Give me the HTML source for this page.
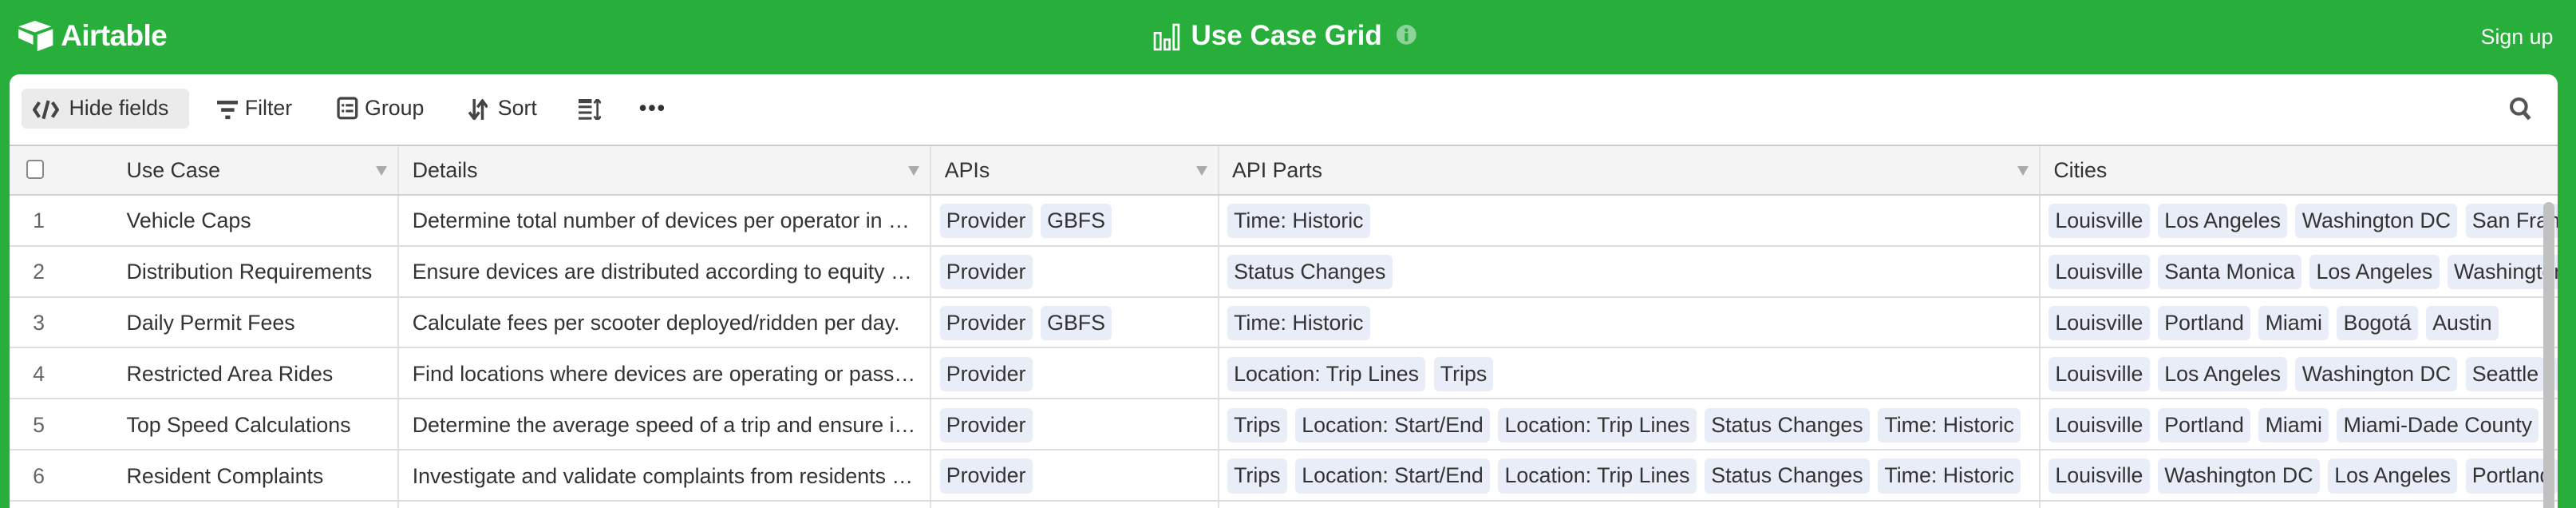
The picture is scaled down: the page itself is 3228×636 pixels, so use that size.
<!DOCTYPE html>
<html><head><meta charset="utf-8"><style>
html,body{margin:0;padding:0;}
html{width:3228px;height:636px;overflow:hidden;background:#fff}
body{width:1568px;height:309px;overflow:hidden;zoom:2.0587;background:#28ae3a;font-family:"Liberation Sans",sans-serif;color:#333;position:relative}
.hdr{position:absolute;left:0;top:0;width:1568px;height:45px;color:#fff}
.logo{position:absolute;left:10px;top:12px}
.brand{position:absolute;left:37px;top:11px;font-size:18px;font-weight:bold;letter-spacing:-0.3px}
.title{position:absolute;left:725px;top:12px;font-size:17px;font-weight:bold}
.signup{position:absolute;left:1510px;top:15px;font-size:13px}
.card{position:absolute;left:6px;top:45px;width:1551px;height:264px;background:#fff;border-radius:6px 6px 0 0;overflow:hidden}
.tb{position:absolute;top:9px;height:24px;font-size:13px;line-height:24px;color:#333}
.btn{background:#ebebeb;border-radius:3px}
.grid{position:absolute;left:0;top:43px;width:1551px}
.hrow{position:absolute;top:0;height:29px;width:1551px;background:#f4f4f4;border-top:1px solid #ccc;border-bottom:2px solid #d3d3d3}
.row{position:absolute;height:30px;width:1551px;border-bottom:1px solid #dcdde0;background:#fff}
.c{position:absolute;top:0;height:100%;font-size:13px;white-space:nowrap;overflow:hidden;box-sizing:border-box}
.v{border-right:1px solid #e2e2e2}
.t{display:inline-block;background:#e9edf8;border-radius:3px;padding:0 4px;height:21px;line-height:21px;margin:5px 5px 0 0;font-size:13px;color:#333}
.arr{position:absolute;top:12px;width:0;height:0;border-left:3.5px solid transparent;border-right:3.5px solid transparent;border-top:6px solid #aaa}
</style></head><body>
<div class="hdr">
<svg class="logo" width="24" height="20" viewBox="0 0 24 20"><path d="M11 0.5 L21 4 L11 7.5 L1 4Z" fill="#fff"/><path d="M12.5 9 L22 5.5 V15.5 L12.5 19Z" fill="#fff"/><path d="M1 5.5 L10 9.5 V15 L1 11Z" fill="#fff"/></svg>
<div class="brand">Airtable</div>
<svg style="position:absolute;left:702px;top:14px" width="17" height="17" viewBox="0 0 17 17"><rect x="1" y="6" width="3.5" height="10" fill="none" stroke="#fff" stroke-width="1.3"/><rect x="7" y="10" width="3" height="6" fill="none" stroke="#fff" stroke-width="1.3"/><rect x="12.5" y="1" width="3" height="15" fill="none" stroke="#fff" stroke-width="1.3"/></svg>
<div class="title">Use Case Grid</div>
<svg style="position:absolute;left:850px;top:15px" width="12" height="12" viewBox="0 0 12 12"><circle cx="6" cy="6" r="6" fill="#8fd39a"/><rect x="5" y="5" width="2" height="5" fill="#28ae3a"/><circle cx="6" cy="3.2" r="1.1" fill="#28ae3a"/></svg>
<div class="signup">Sign up</div>
</div>
<div class="card">
<div class="tb btn" style="left:7px;width:102px"></div>
<svg style="position:absolute;left:14px;top:15px" width="16" height="13" viewBox="0 0 16 13"><path d="M4 2 L1 6.5 L4 11 M12 2 L15 6.5 L12 11 M9.5 1 L6.5 12" stroke="#444" stroke-width="2" fill="none"/></svg>
<div class="tb" style="left:36px">Hide fields</div>
<svg style="position:absolute;left:126px;top:15px" width="13" height="13" viewBox="0 0 13 13"><rect x="0" y="1" width="13" height="2.2" fill="#444"/><rect x="2.5" y="5.5" width="8" height="2.2" fill="#444"/><rect x="5" y="10" width="3" height="2.2" fill="#444"/></svg>
<div class="tb" style="left:143px">Filter</div>
<svg style="position:absolute;left:199px;top:14px" width="13" height="14" viewBox="0 0 13 14"><rect x="1" y="1" width="11" height="12" rx="1.5" fill="none" stroke="#444" stroke-width="1.6"/><rect x="3" y="4.5" width="1.5" height="1.5" fill="#444"/><rect x="5.5" y="4.5" width="4.5" height="1.5" fill="#444"/><rect x="3" y="8" width="1.5" height="1.5" fill="#444"/><rect x="5.5" y="8" width="4.5" height="1.5" fill="#444"/></svg>
<div class="tb" style="left:216px">Group</div>
<svg style="position:absolute;left:279px;top:15px" width="12" height="13" viewBox="0 0 12 13"><path d="M3.5 0 V11 M0.5 8 L3.5 12 L6.5 8 M8.5 13 V2 M5.5 5 L8.5 1 L11.5 5" stroke="#444" stroke-width="1.7" fill="none"/></svg>
<div class="tb" style="left:297px">Sort</div>
<svg style="position:absolute;left:346px;top:15px" width="14" height="13" viewBox="0 0 14 13"><rect x="0" y="0" width="8" height="2.5" fill="#444"/><rect x="0" y="4" width="8" height="1.5" fill="#444"/><rect x="0" y="7.5" width="8" height="1.5" fill="#444"/><rect x="0" y="11" width="8" height="1.5" fill="#444"/><path d="M11.5 0 V13 M9.5 2.5 L11.5 0 L13.5 2.5 M9.5 10.5 L11.5 13 L13.5 10.5" stroke="#444" stroke-width="1.3" fill="none"/></svg>
<div class="tb" style="left:383px;font-weight:bold;letter-spacing:1px">•••</div>
<svg style="position:absolute;left:1521px;top:14px" width="14" height="15" viewBox="0 0 14 15"><circle cx="6" cy="6" r="4.5" stroke="#555" stroke-width="2" fill="none"/><path d="M9 9.5 L12.5 13.5" stroke="#555" stroke-width="2.4"/></svg>
<div class="grid">
<div class="hrow">
<div style="position:absolute;left:10px;top:8px;width:9px;height:10px;border:1px solid #888;border-radius:2px;background:#fff"></div>
<div class="c v" style="left:60px;width:177px;padding:7px 0 0 11px">Use Case</div><div class="arr" style="left:223px"></div>
<div class="c v" style="left:237px;width:324px;padding:7px 0 0 8px">Details</div><div class="arr" style="left:547px"></div>
<div class="c v" style="left:561px;width:175px;padding:7px 0 0 8px">APIs</div><div class="arr" style="left:722px"></div>
<div class="c v" style="left:736px;width:500px;padding:7px 0 0 8px">API Parts</div><div class="arr" style="left:1222px"></div>
<div class="c" style="left:1236px;width:315px;padding:7px 0 0 8px">Cities</div>
</div>
<div style="position:absolute;top:31px;left:0;width:1551px">
<div class="row" style="top:0">
<div class="c" style="left:14px;padding-top:8px;color:#666">1</div>
<div class="c v" style="left:60px;width:177px;padding:8px 0 0 11px">Vehicle Caps</div>
<div class="c v" style="left:237px;width:324px;padding:8px 0 0 8px">Determine total number of devices per operator in …</div>
<div class="c v" style="left:561px;width:175px;padding-left:5px"><span class="t">Provider</span><span class="t">GBFS</span></div>
<div class="c v" style="left:736px;width:500px;padding-left:5px"><span class="t">Time: Historic</span></div>
<div class="c" style="left:1236px;width:315px;padding-left:5px"><span class="t">Louisville</span><span class="t">Los Angeles</span><span class="t">Washington DC</span><span class="t">San Francisco</span></div>
</div>
<div class="row" style="top:31px">
<div class="c" style="left:14px;padding-top:8px;color:#666">2</div>
<div class="c v" style="left:60px;width:177px;padding:8px 0 0 11px">Distribution Requirements</div>
<div class="c v" style="left:237px;width:324px;padding:8px 0 0 8px">Ensure devices are distributed according to equity …</div>
<div class="c v" style="left:561px;width:175px;padding-left:5px"><span class="t">Provider</span></div>
<div class="c v" style="left:736px;width:500px;padding-left:5px"><span class="t">Status Changes</span></div>
<div class="c" style="left:1236px;width:315px;padding-left:5px"><span class="t">Louisville</span><span class="t">Santa Monica</span><span class="t">Los Angeles</span><span class="t">Washington DC</span></div>
</div>
<div class="row" style="top:62px">
<div class="c" style="left:14px;padding-top:8px;color:#666">3</div>
<div class="c v" style="left:60px;width:177px;padding:8px 0 0 11px">Daily Permit Fees</div>
<div class="c v" style="left:237px;width:324px;padding:8px 0 0 8px">Calculate fees per scooter deployed/ridden per day.</div>
<div class="c v" style="left:561px;width:175px;padding-left:5px"><span class="t">Provider</span><span class="t">GBFS</span></div>
<div class="c v" style="left:736px;width:500px;padding-left:5px"><span class="t">Time: Historic</span></div>
<div class="c" style="left:1236px;width:315px;padding-left:5px"><span class="t">Louisville</span><span class="t">Portland</span><span class="t">Miami</span><span class="t">Bogotá</span><span class="t">Austin</span></div>
</div>
<div class="row" style="top:93px">
<div class="c" style="left:14px;padding-top:8px;color:#666">4</div>
<div class="c v" style="left:60px;width:177px;padding:8px 0 0 11px">Restricted Area Rides</div>
<div class="c v" style="left:237px;width:324px;padding:8px 0 0 8px">Find locations where devices are operating or pass…</div>
<div class="c v" style="left:561px;width:175px;padding-left:5px"><span class="t">Provider</span></div>
<div class="c v" style="left:736px;width:500px;padding-left:5px"><span class="t">Location: Trip Lines</span><span class="t">Trips</span></div>
<div class="c" style="left:1236px;width:315px;padding-left:5px"><span class="t">Louisville</span><span class="t">Los Angeles</span><span class="t">Washington DC</span><span class="t">Seattle</span><span class="t">Santa</span></div>
</div>
<div class="row" style="top:124px">
<div class="c" style="left:14px;padding-top:8px;color:#666">5</div>
<div class="c v" style="left:60px;width:177px;padding:8px 0 0 11px">Top Speed Calculations</div>
<div class="c v" style="left:237px;width:324px;padding:8px 0 0 8px">Determine the average speed of a trip and ensure i…</div>
<div class="c v" style="left:561px;width:175px;padding-left:5px"><span class="t">Provider</span></div>
<div class="c v" style="left:736px;width:500px;padding-left:5px"><span class="t">Trips</span><span class="t">Location: Start/End</span><span class="t">Location: Trip Lines</span><span class="t">Status Changes</span><span class="t">Time: Historic</span></div>
<div class="c" style="left:1236px;width:315px;padding-left:5px"><span class="t">Louisville</span><span class="t">Portland</span><span class="t">Miami</span><span class="t">Miami-Dade County</span></div>
</div>
<div class="row" style="top:155px">
<div class="c" style="left:14px;padding-top:8px;color:#666">6</div>
<div class="c v" style="left:60px;width:177px;padding:8px 0 0 11px">Resident Complaints</div>
<div class="c v" style="left:237px;width:324px;padding:8px 0 0 8px">Investigate and validate complaints from residents …</div>
<div class="c v" style="left:561px;width:175px;padding-left:5px"><span class="t">Provider</span></div>
<div class="c v" style="left:736px;width:500px;padding-left:5px"><span class="t">Trips</span><span class="t">Location: Start/End</span><span class="t">Location: Trip Lines</span><span class="t">Status Changes</span><span class="t">Time: Historic</span></div>
<div class="c" style="left:1236px;width:315px;padding-left:5px"><span class="t">Louisville</span><span class="t">Washington DC</span><span class="t">Los Angeles</span><span class="t">Portland</span><span class="t">Seattle</span></div>
</div>
<div class="row" style="top:186px;border-bottom:none">
<div class="c v" style="left:60px;width:177px"></div><div class="c v" style="left:237px;width:324px"></div><div class="c v" style="left:561px;width:175px"></div><div class="c v" style="left:736px;width:500px"></div>
</div>
</div>
</div>
<div style="position:absolute;left:1542px;top:78px;width:7px;height:200px;background:#c1c1c1;border-radius:4px"></div>
</div>
</body></html>
